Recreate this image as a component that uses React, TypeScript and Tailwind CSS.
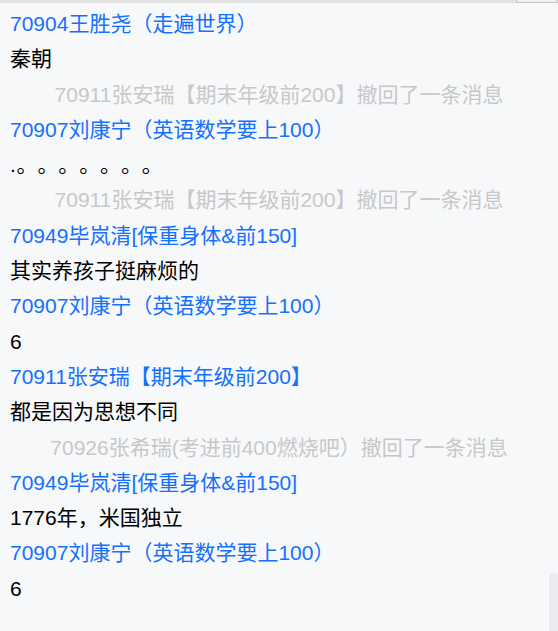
import React from "react";

type Item =
  | { kind: "name"; text: string }
  | { kind: "msg"; text: string; dots?: boolean }
  | { kind: "recall"; text: string };

const items: Item[] = [
  { kind: "name", text: "70904王胜尧（走遍世界）" },
  { kind: "msg", text: "秦朝" },
  { kind: "recall", text: "70911张安瑞【期末年级前200】撤回了一条消息" },
  { kind: "name", text: "70907刘康宁（英语数学要上100）" },
  { kind: "msg", text: ".。。。。。。。", dots: true },
  { kind: "recall", text: "70911张安瑞【期末年级前200】撤回了一条消息" },
  { kind: "name", text: "70949毕岚清[保重身体&前150]" },
  { kind: "msg", text: "其实养孩子挺麻烦的" },
  { kind: "name", text: "70907刘康宁（英语数学要上100）" },
  { kind: "msg", text: "6" },
  { kind: "name", text: "70911张安瑞【期末年级前200】" },
  { kind: "msg", text: "都是因为思想不同" },
  { kind: "recall", text: "70926张希瑞(考进前400燃烧吧）撤回了一条消息" },
  { kind: "name", text: "70949毕岚清[保重身体&前150]" },
  { kind: "msg", text: "1776年，米国独立" },
  { kind: "name", text: "70907刘康宁（英语数学要上100）" },
  { kind: "msg", text: "6" },
];

function Dots() {
  return (
    <div className="flex items-baseline pl-[10px] text-black whitespace-nowrap">
      <span className="inline-block w-[6.5px]">.</span>
      {[0, 1, 2, 3, 4, 5, 6].map((k) => (
        <span key={k} className="inline-block w-[20.9px]">
          。
        </span>
      ))}
    </div>
  );
}

export default function App() {
  return (
    <div
      className="relative w-full h-[631px] overflow-hidden bg-[#f7f8fa] text-[21px] leading-[35.3px]"
      style={{ fontFamily: '"Liberation Sans", "Noto Sans CJK SC", sans-serif' }}
    >
      <div className="flex h-[3px] justify-end bg-[#e3e3e3]">
        <div className="mr-[1px] h-[3px] w-[41px] border-x border-b border-[#c4c4c4] bg-[#f1f1f1]" />
      </div>
      <div className="flex flex-col pt-[3px]">
        {items.map((it, i) => {
          if (it.kind === "name")
            return (
              <div key={i} className="pl-[10px] text-[#1470ff] whitespace-nowrap">
                {it.text}
              </div>
            );
          if (it.kind === "msg")
            return it.dots ? (
              <Dots key={i} />
            ) : (
              <div key={i} className="pl-[10px] text-black whitespace-nowrap">
                {it.text}
              </div>
            );
          return (
            <div key={i} className="text-center text-[#c8c8c8] whitespace-nowrap">
              {it.text}
            </div>
          );
        })}
      </div>
      <div className="absolute right-0 bottom-0 h-[58px] w-[9px] rounded-t-[3px] bg-[#ebebf0]" />
    </div>
  );
}
